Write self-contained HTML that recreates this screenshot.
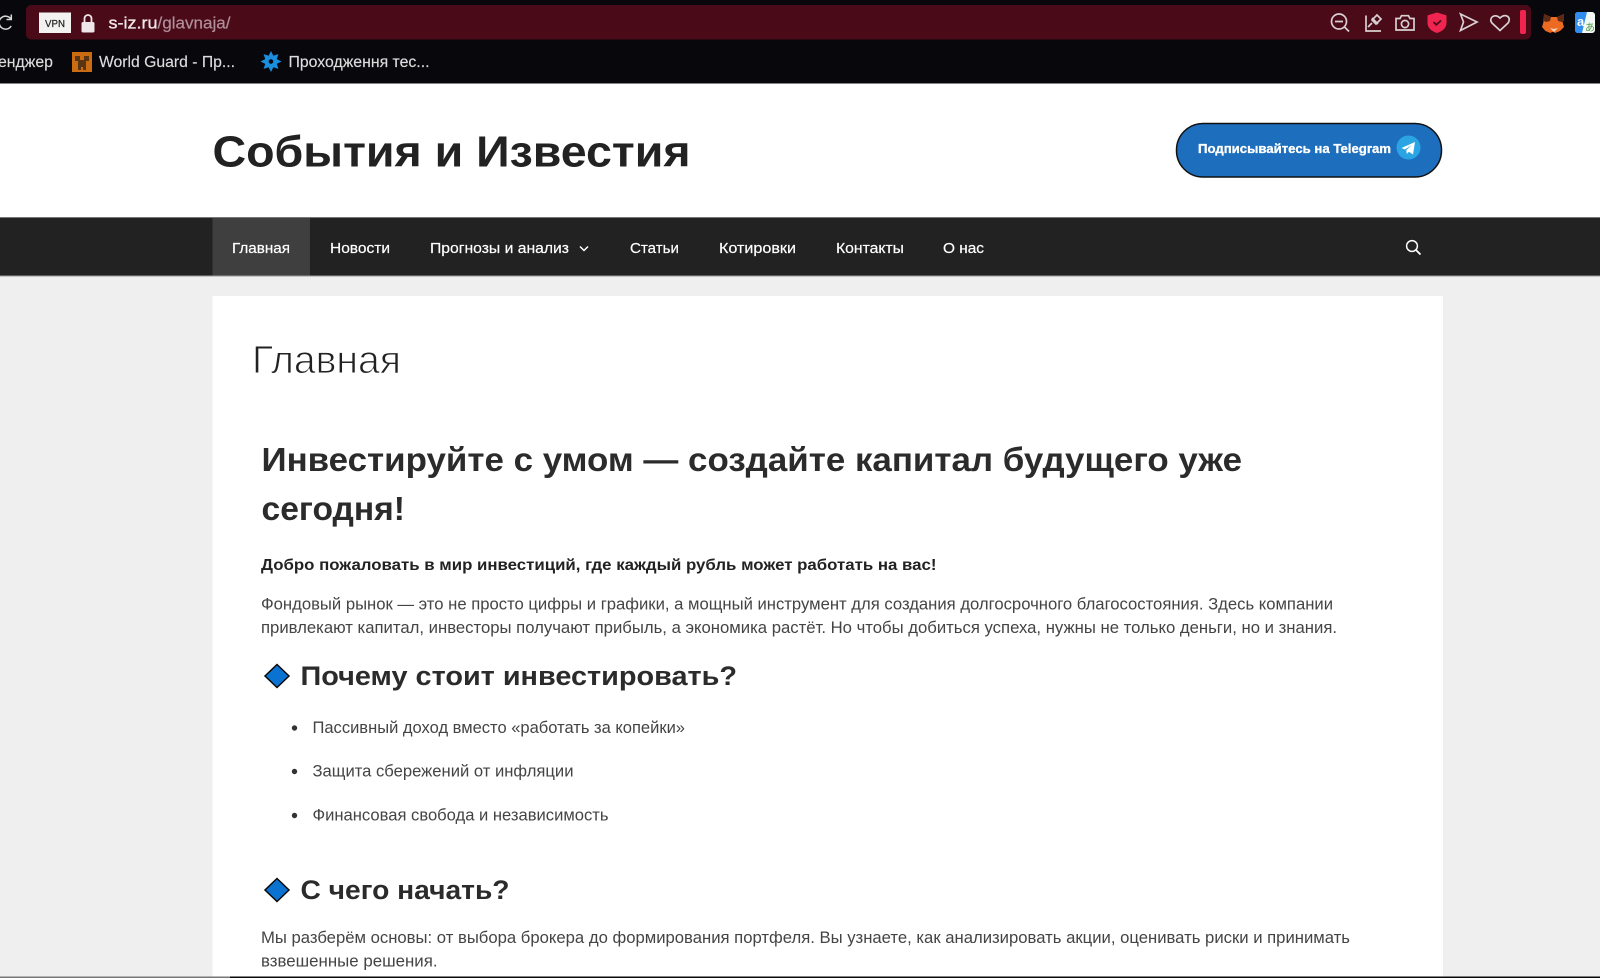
<!DOCTYPE html>
<html lang="ru"><head><meta charset="utf-8"><title>События и Известия</title>
<style>
html,body{margin:0;padding:0;width:1600px;height:978px;overflow:hidden;background:#efefef}
svg{display:block;position:absolute;left:0;top:0}
text{font-family:"Liberation Sans",sans-serif;white-space:pre}
.b{font-weight:700}
.p{font-size:16.3px;fill:#444}
.n{font-size:15px;fill:#fff;stroke:#fff;stroke-width:.2}
.h1{font-size:33px;font-weight:700;fill:#2b2b2b}
.h2{font-size:27px;font-weight:700;fill:#2b2b2b}
.bm{font-size:15.5px;fill:#dcdcdc}
.ic{fill:none;stroke:#d8d0d2;stroke-width:1.7}
</style></head><body>
<svg width="1600" height="978" viewBox="0 0 1600 978" xmlns="http://www.w3.org/2000/svg">
<rect width="1600" height="978" fill="#efefef"/>
<!-- browser chrome -->
<rect width="1600" height="83.500" fill="#08080c"/>
<rect x="26" y="5" width="1505" height="34.500" rx="5" fill="#4a0a18"/>
<path d="M11 19a6.500 6.500 0 1 0 .2 7M11.300 14.500v5h-4.800" fill="none" stroke="#d8d8d8" stroke-width="1.500"/>
<rect x="39" y="12.500" width="32" height="20.500" fill="#f4f1f1"/>
<text x="55" y="27" font-size="10.500" fill="#222" stroke="#222" stroke-width=".2" text-anchor="middle" textLength="20" lengthAdjust="spacingAndGlyphs">VPN</text>
<rect x="81.500" y="22" width="13" height="10.500" rx="1.500" fill="#eee6e8"/>
<path d="M84.500 22v-3.500a3.500 3.500 0 0 1 7 0V22" fill="none" stroke="#eee6e8" stroke-width="1.800"/>
<text x="108.500" y="28.500" font-size="16.500" fill="#efe6e8" stroke="#efe6e8" stroke-width=".35" textLength="49" lengthAdjust="spacingAndGlyphs">s-iz.ru</text>
<text x="157.500" y="28.500" font-size="16.500" fill="#b08f9a" stroke="#b08f9a" stroke-width=".2" textLength="73" lengthAdjust="spacingAndGlyphs">/glavnaja/</text>
<!-- toolbar icons -->
<circle cx="1339" cy="21.500" r="7.500" class="ic"/><path d="M1335 21.500h8M1344.500 27l4.500 4.500" class="ic"/>
<path d="M1366 15.500v15.500h15M1368 27l4-4m0-5 6 6m-1-9 4 4-5 5-4-4z" class="ic"/>
<path d="M1396 18.500h4l1.500-2.800h7l1.500 2.800h4v11.500h-18z" class="ic"/><circle cx="1405" cy="24" r="3.600" class="ic"/>
<path d="M1428.500 15l8.500-2.500 8.500 2.500c1 .3 1 .8 1 1.500v6.500c0 5-4.500 8.500-9.500 10-5-1.500-9.500-5-9.500-10v-6.500c0-.7 0-1.200 1-1.500z" fill="#f0254f"/>
<path d="M1433.500 22l2.800 2.800 4.700-4.300" fill="none" stroke="#4a0a18" stroke-width="1.800"/>
<path d="M1460.500 14l16.500 8-16.500 8.500 3-8.500z" class="ic"/>
<path d="M1500 30.500l-8-7.500c-4-4.500 2.500-10.500 8-5 5.500-5.500 12-.5 8 5z" class="ic"/>
<rect x="1520" y="10" width="6" height="24" rx="2" fill="#f0254f"/>
<!-- extensions -->
<path d="M1544 14l7 3h6l7-3-1.500 8 1.500 5-4 4-5 2-1.500-1-1.500 0-1.500 1-5-2-3.500-4 1.500-5z" fill="#ec6a21"/>
<path d="M1544 14l7 3-1 4-4 1-2-1zM1564 14l-7 3 1 4 4 1 2-1z" fill="#5c2a14"/>
<path d="M1550 28l4 4 4-4-4 1z" fill="#f3d6c2"/>
<rect x="1575" y="12" width="20" height="21" rx="3" fill="#f4f8f4"/>
<path d="M1578 12h9l-5 21h-4a3 3 0 0 1-3-3V15a3 3 0 0 1 3-3z" fill="#2f8cf0"/>
<text x="1577" y="26" font-size="13" fill="#fff" class="b">a</text>
<text x="1585" y="31" font-size="10" fill="#4a9a4a" style="font-family:'Noto Sans CJK JP',sans-serif">あ</text>
<!-- bookmarks -->
<text x="-2" y="67" class="bm" stroke="#dcdcdc" stroke-width=".15" textLength="55" lengthAdjust="spacingAndGlyphs">енджер</text>
<rect x="72" y="52" width="20" height="20" fill="#cc6c12"/>
<path d="M75 56h5v4h4v-4h5v5h-3v9h-3v-3h-2v3h-3v-9h-3z" fill="#5a3514"/>
<text x="99" y="67" class="bm" stroke="#dcdcdc" stroke-width=".15" textLength="136" lengthAdjust="spacingAndGlyphs">World Guard - Пр...</text>
<g fill="#1a8fe0" transform="translate(271,61.500)">
<path d="M-3.500 -3.500l3.500-7 3.500 7-3.500 1.500z"/>
<path d="M-3.500 -3.500l3.500-7 3.500 7-3.500 1.500z" transform="rotate(45)"/><path d="M-3.500 -3.500l3.500-7 3.500 7-3.500 1.500z" transform="rotate(90)"/><path d="M-3.500 -3.500l3.500-7 3.500 7-3.500 1.500z" transform="rotate(135)"/><path d="M-3.500 -3.500l3.500-7 3.500 7-3.500 1.500z" transform="rotate(180)"/><path d="M-3.500 -3.500l3.500-7 3.500 7-3.500 1.500z" transform="rotate(225)"/><path d="M-3.500 -3.500l3.500-7 3.500 7-3.500 1.500z" transform="rotate(270)"/><path d="M-3.500 -3.500l3.500-7 3.500 7-3.500 1.500z" transform="rotate(315)"/>
</g>
<circle cx="271" cy="61.500" r="1.500" fill="#08080c"/>
<text x="288.500" y="67" class="bm" stroke="#dcdcdc" stroke-width=".15" textLength="141" lengthAdjust="spacingAndGlyphs">Проходження тес...</text>
<!-- site header -->
<rect y="83.500" width="1600" height="133.500" fill="#fff"/>
<text x="212.500" y="166.500" font-size="44" class="b" fill="#222" textLength="478" lengthAdjust="spacingAndGlyphs">События и Известия</text>
<rect x="1176.500" y="123.500" width="265" height="53.500" rx="26.500" fill="#1d6fbd" stroke="#111" stroke-width="1.500"/>
<text x="1198" y="153" font-size="13" class="b" fill="#fff" stroke="#fff" stroke-width=".3" textLength="193" lengthAdjust="spacingAndGlyphs">Подписывайтесь на Telegram</text>
<circle cx="1408.500" cy="147.500" r="12" fill="#2ba4e4"/>
<path d="M1401.500 148l13.500-6-2 12.500-4-2.800-2.200 2.300-.5-4 5.500-5-7 4.500z" fill="#fff"/>
<!-- nav -->
<rect y="217" width="1600" height="59" fill="#222"/>
<rect y="217" width="1600" height="1" fill="#777"/>
<rect y="275.500" width="1600" height="1" fill="#999"/>
<rect x="212.500" y="218" width="97.500" height="57.500" fill="#3f3f3f"/>
<text x="232" y="253" class="n" textLength="58" lengthAdjust="spacingAndGlyphs">Главная</text>
<text x="330" y="253" class="n" textLength="60" lengthAdjust="spacingAndGlyphs">Новости</text>
<text x="430" y="253" class="n" textLength="139" lengthAdjust="spacingAndGlyphs">Прогнозы и анализ</text>
<path d="M580 246.500l4 4 4-4" fill="none" stroke="#fff" stroke-width="1.500"/>
<text x="630" y="253" class="n" textLength="49" lengthAdjust="spacingAndGlyphs">Статьи</text>
<text x="719" y="253" class="n" textLength="77" lengthAdjust="spacingAndGlyphs">Котировки</text>
<text x="836" y="253" class="n" textLength="68" lengthAdjust="spacingAndGlyphs">Контакты</text>
<text x="943" y="253" class="n" textLength="41" lengthAdjust="spacingAndGlyphs">О нас</text>
<circle cx="1412" cy="246" r="5.400" fill="none" stroke="#fff" stroke-width="1.500"/>
<path d="M1416 250l4.500 4.500" stroke="#fff" stroke-width="1.800"/>
<!-- card -->
<rect x="212.500" y="296" width="1230.500" height="682" fill="#fff"/>
<text x="252" y="373" font-size="39" fill="#222" stroke="#fff" stroke-width="1" textLength="149" lengthAdjust="spacingAndGlyphs">Главная</text>
<text x="261.500" y="471" class="h1" textLength="980.500" lengthAdjust="spacingAndGlyphs">Инвестируйте с умом — создайте капитал будущего уже</text>
<text x="261.500" y="520" class="h1" textLength="143.500" lengthAdjust="spacingAndGlyphs">сегодня!</text>
<text x="261" y="570" font-size="16" class="b" fill="#222" textLength="675.500" lengthAdjust="spacingAndGlyphs">Добро пожаловать в мир инвестиций, где каждый рубль может работать на вас!</text>
<text x="261" y="609.500" class="p" textLength="1072" lengthAdjust="spacingAndGlyphs">Фондовый рынок — это не просто цифры и графики, а мощный инструмент для создания долгосрочного благосостояния. Здесь компании</text>
<text x="261" y="633" class="p" textLength="1076" lengthAdjust="spacingAndGlyphs">привлекают капитал, инвесторы получают прибыль, а экономика растёт. Но чтобы добиться успеха, нужны не только деньги, но и знания.</text>
<path d="M277 664.500l12 11.500-12 11.500-12-11.500z" fill="#0a73d2" stroke="#0a0a0a" stroke-width="1.500"/>
<text x="300.500" y="685" class="h2" textLength="436.500" lengthAdjust="spacingAndGlyphs">Почему стоит инвестировать?</text>
<circle cx="294.500" cy="728" r="2.700" fill="#333"/>
<text x="312.500" y="733" class="p" textLength="372.500" lengthAdjust="spacingAndGlyphs">Пассивный доход вместо «работать за копейки»</text>
<circle cx="294.500" cy="771.500" r="2.700" fill="#333"/>
<text x="312.500" y="776.500" class="p" textLength="261" lengthAdjust="spacingAndGlyphs">Защита сбережений от инфляции</text>
<circle cx="294.500" cy="815.500" r="2.700" fill="#333"/>
<text x="312.500" y="820.500" class="p" textLength="296" lengthAdjust="spacingAndGlyphs">Финансовая свобода и независимость</text>
<path d="M277 878.500l12 11.500-12 11.500-12-11.500z" fill="#0a73d2" stroke="#0a0a0a" stroke-width="1.500"/>
<text x="300.500" y="899" class="h2" textLength="209" lengthAdjust="spacingAndGlyphs">С чего начать?</text>
<text x="261" y="943" class="p" textLength="1089" lengthAdjust="spacingAndGlyphs">Мы разберём основы: от выбора брокера до формирования портфеля. Вы узнаете, как анализировать акции, оценивать риски и принимать</text>
<text x="261" y="966.500" class="p" textLength="176.500" lengthAdjust="spacingAndGlyphs">взвешенные решения.</text>
<!-- bottom edge -->
<rect y="976.500" width="230" height="1.500" fill="#777"/>
<rect x="230" y="976.500" width="1370" height="1.500" fill="#0a0a0a"/>
</svg>
</body></html>
